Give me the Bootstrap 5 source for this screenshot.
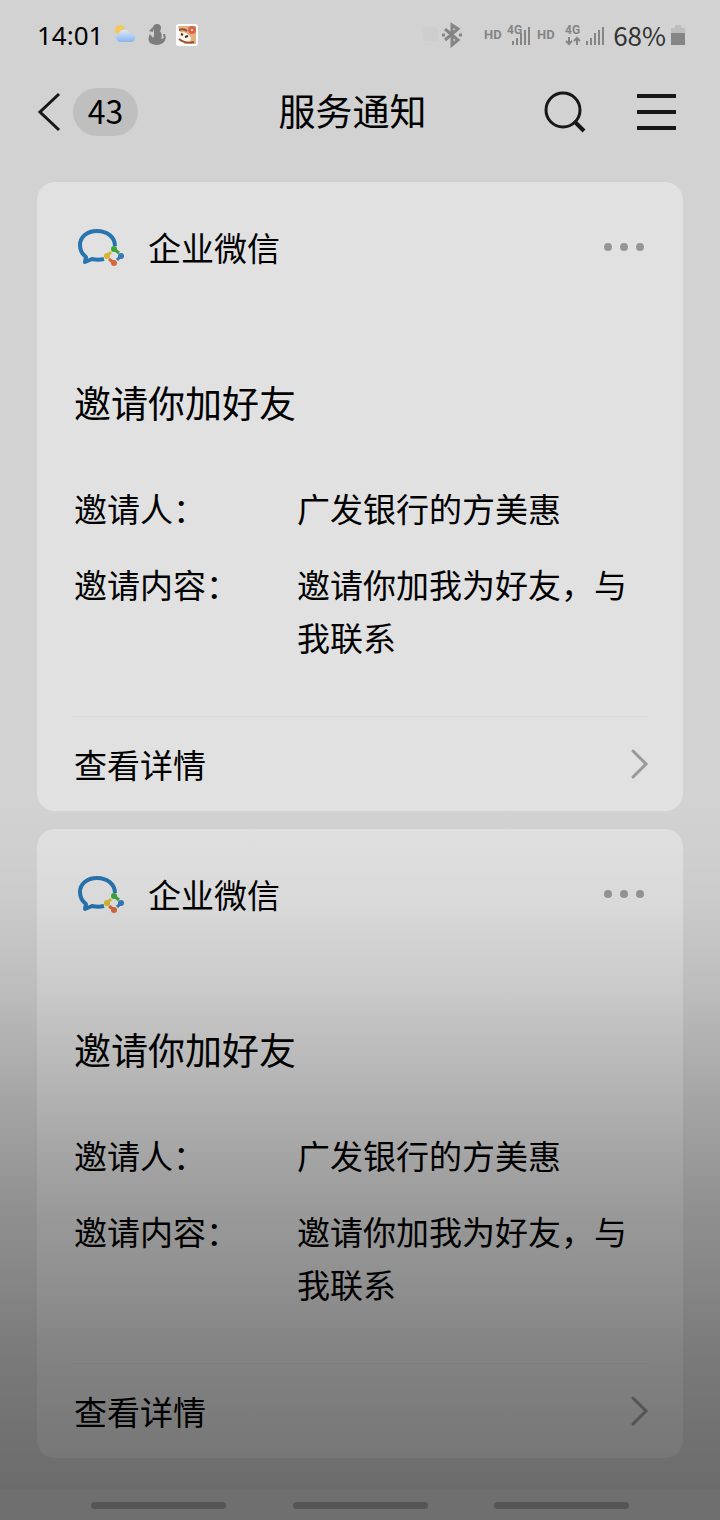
<!DOCTYPE html>
<html lang="zh-CN">
<head>
<meta charset="utf-8">
<meta name="viewport" content="width=device-width, initial-scale=1">
<title>服务通知</title>
<link href="https://cdn.jsdelivr.net/npm/bootstrap@5.3.0/dist/css/bootstrap.min.css" rel="stylesheet">
<style>
  body {
    font-family: "Noto Sans CJK SC", sans-serif;
    font-size: 33px;
    line-height: 53px;
    color: #000;
    background: #d2d2d2;
  }
  .status-bar { height: 70px; padding: 0 34px 0 37px; line-height: 32px; }
  .clock { font-size: 26px; font-family: "Noto Sans", sans-serif; }
  .battery-level { font-size: 26px; color: #333; }
  .top-bar { height: 84px; padding: 0 44px 0 37px; }
  .top-bar h1 { font-size: 37px; line-height: 50px; padding: 0 0 4px 24px; }
  .top-actions { gap: 49px; }
  .unread { font-size: 32px; line-height: 44px; padding-bottom: 4px; width: 65px; color: #000; background: #bfbfbf; }
  .feed { padding: 28px 37px 32px; gap: 18px; }
  .notice { --bs-card-bg: #e1e1e1; --bs-card-color: #000; --bs-card-border-width: 0; border-radius: 18px; padding: 0 36px 0 37px; }
  .notice-head { height: 130px; }
  .notice-title { font-size: 37px; line-height: 52px; margin: 64px 0 54px; }
  .notice-fields { display: grid; grid-template-columns: 223px 1fr; row-gap: 23px; margin: 0 0 52px; }
  .notice-more { border-top: 1px solid #d8d8d8; height: 95px; color: #000; margin: 0 -2px; padding-left: 2px; }
  .shade {
    position: absolute; inset: 0; pointer-events: none;
    background: linear-gradient(transparent 53%, rgba(0,0,0,.03) 59%, rgba(0,0,0,.1) 65%, rgba(0,0,0,.15) 68%, rgba(0,0,0,.24) 74%, rgba(0,0,0,.32) 80%, rgba(0,0,0,.37) 85%, rgba(0,0,0,.42) 89%, rgba(0,0,0,.465) 95%, rgba(0,0,0,.485) 98%);
  }
  .nav-keys { height: 30px; padding: 0 91px; background: #d8d8d8; }
  .nav-keys button { width: 135px; height: 7px; border-radius: 4px; background: #a6a6a6; }
</style>
</head>
<body>
<svg class="d-none">
  <symbol id="logo" viewBox="0 0 50 42">
    <path d="M41 20C41 11 33 5 23 5 13 5 6 11 6 19c0 5 2 9 6 12l-1 5 7-3c4 1 8 1 12 0" fill="none" stroke="#2774ae" stroke-width="4" stroke-linejoin="round"/>
    <g stroke-width="3" fill="none">
      <path d="M40 23l5 4" stroke="#3da33b"/><path d="M47 30l-4 4" stroke="#3679b5"/>
      <path d="M40 37l-5-4" stroke="#d5673a"/><path d="M33 30l4-4" stroke="#d2b62c"/>
    </g>
    <circle cx="40" cy="23" r="3" fill="#3da33b"/><circle cx="47" cy="30" r="3" fill="#3679b5"/>
    <circle cx="40" cy="37" r="3" fill="#d5673a"/><circle cx="33" cy="30" r="3" fill="#d2b62c"/>
  </symbol>
</svg>
<div class="position-relative min-vh-100 d-flex flex-column">
  <header>
    <div class="status-bar d-flex align-items-center justify-content-between">
      <div class="d-flex align-items-center">
        <span class="clock">14:01</span>
        <svg class="ms-2" width="100" height="28" viewBox="0 0 100 28">
          <defs><linearGradient id="sky" x2="0" y2="1"><stop stop-color="#dce9fb"/><stop offset="1" stop-color="#88b4ee"/></linearGradient></defs>
          <circle cx="9" cy="9" r="5" fill="#f3c75c"/>
          <path d="M8 21a5 5 0 0 1 0-9 6 6 0 0 1 11 1 4 4 0 0 1 2 8z" fill="url(#sky)"/>
          <circle cx="46" cy="7" r="4" fill="#7d7d7d"/>
          <path d="M42 6l-4 4 4 1zM43 10h6q3 4 1 8l3-1-1-4 2 0q2 6-2 9-6 4-13 0-3-4 0-9l3 4 1-2z" fill="#7d7d7d"/>
          <rect x="65" y="3" width="22" height="22" rx="3" fill="#fff"/>
          <path d="M67 5h18v18H73z" fill="#e5b184"/>
          <path d="M68 12q7-3 12 5l-1 4q-8 1-12-4z" fill="#fff8e8"/>
          <path d="M68 9q5-2 8 1M68 18q6 5 15 3" stroke="#925238" stroke-width="2" fill="none"/>
          <circle cx="81" cy="9" r="4" fill="#dd6546"/><circle cx="81" cy="9" r="1" fill="#fff"/>
          <path d="M70 13l2 1M74 16l3-1" stroke="#333" stroke-width="2"/>
        </svg>
      </div>
      <div class="d-flex align-items-center">
        <svg width="192" height="28" viewBox="0 0 192 28" fill="none" stroke="#858585" font-family="Roboto, sans-serif" font-weight="700">
          <rect x="2" y="6" width="15" height="14" rx="4" fill="#cecece" stroke="none"/>
          <path d="M24 8l13 11-6 5V4l6 4-13 11" stroke-width="3"/>
          <path d="M21 14h3M38 14h3" stroke-width="3"/>
          <g fill="#858585" stroke="none"><text x="63" y="18" font-size="13">HD</text><text x="86" y="13" font-size="12">4G</text><text x="116" y="18" font-size="13">HD</text><text x="144" y="13" font-size="12">4G</text></g>
          <path d="M92 24v-4M96 24v-7M100 24V12M104 24V9M108 24V6M166 24v-4M170 24v-7M174 24V12M178 24V9M182 24V6" stroke-width="2"/>
          <path d="M148 16v7m-3-3l3 3 3-3M156 24v-7m-3 3l3-3 3 3" stroke-width="2"/>
        </svg>
        <span class="battery-level">68%</span>
        <svg class="ms-1" width="16" height="24" viewBox="0 0 16 24"><path d="M5 2h6v3h4v5H1V5h4z" fill="#bdbdbd"/><path d="M1 10h14v12H1z" fill="#858585"/></svg>
      </div>
    </div>
    <nav class="top-bar d-flex align-items-center">
      <button class="btn border-0 p-0 d-flex align-items-center" type="button" aria-label="返回，43 条未读">
        <svg width="36" height="42" viewBox="0 0 36 42" fill="none" stroke="#171717" stroke-width="3"><path d="M22 3L3 21l19 18"/></svg>
        <span class="unread rounded-pill">43</span>
      </button>
      <h1 class="flex-grow-1 text-center m-0 fw-normal text-nowrap">服务通知</h1>
      <div class="top-actions d-flex align-items-center">
        <button class="btn border-0 p-0 d-flex" type="button" aria-label="搜索">
          <svg width="44" height="44" viewBox="0 0 44 44" fill="none" stroke="#171717"><circle cx="20" cy="20" r="17" stroke-width="3"/><path d="M31 31l10 10" stroke-width="4"/></svg>
        </button>
        <button class="btn border-0 p-0 d-flex" type="button" aria-label="菜单">
          <svg width="40" height="40" viewBox="0 0 40 40" stroke="#171717" stroke-width="4"><path d="M1 4h39M1 20h39M1 36h39"/></svg>
        </button>
      </div>
    </nav>
  </header>

  <main class="feed d-flex flex-column flex-grow-1">
    <article class="card notice">
      <div class="notice-head d-flex align-items-center">
        <svg class="me-4" width="50" height="42"><use href="#logo"/></svg>
        <span>企业微信</span>
        <button class="btn border-0 p-0 ms-auto d-flex" type="button" aria-label="更多"><svg width="44" height="10" fill="#969696"><circle cx="5" cy="5" r="4"/><circle cx="21" cy="5" r="4"/><circle cx="37" cy="5" r="4"/></svg></button>
      </div>
      <h2 class="notice-title fw-normal">邀请你加好友</h2>
      <dl class="notice-fields">
        <dt class="fw-normal">邀请人：</dt><dd class="m-0">广发银行的方美惠</dd>
        <dt class="fw-normal">邀请内容：</dt><dd class="m-0">邀请你加我为好友，与我联系</dd>
      </dl>
      <a href="#" class="notice-more d-flex align-items-center justify-content-between text-decoration-none">查看详情
        <svg width="18" height="32" viewBox="0 0 18 32" fill="none" stroke="#999" stroke-width="3" stroke-linecap="round"><path d="M2 3l13 13L2 29"/></svg></a>
    </article>
    <article class="card notice">
      <div class="notice-head d-flex align-items-center">
        <svg class="me-4" width="50" height="42"><use href="#logo"/></svg>
        <span>企业微信</span>
        <button class="btn border-0 p-0 ms-auto d-flex" type="button" aria-label="更多"><svg width="44" height="10" fill="#969696"><circle cx="5" cy="5" r="4"/><circle cx="21" cy="5" r="4"/><circle cx="37" cy="5" r="4"/></svg></button>
      </div>
      <h2 class="notice-title fw-normal">邀请你加好友</h2>
      <dl class="notice-fields">
        <dt class="fw-normal">邀请人：</dt><dd class="m-0">广发银行的方美惠</dd>
        <dt class="fw-normal">邀请内容：</dt><dd class="m-0">邀请你加我为好友，与我联系</dd>
      </dl>
      <a href="#" class="notice-more d-flex align-items-center justify-content-between text-decoration-none">查看详情
        <svg width="18" height="32" viewBox="0 0 18 32" fill="none" stroke="#999" stroke-width="3" stroke-linecap="round"><path d="M2 3l13 13L2 29"/></svg></a>
    </article>
  </main>

  <footer class="nav-keys d-flex align-items-center justify-content-between">
    <button class="btn border-0 p-0" type="button" aria-label="最近任务"></button>
    <button class="btn border-0 p-0" type="button" aria-label="主屏幕"></button>
    <button class="btn border-0 p-0" type="button" aria-label="返回上一页"></button>
  </footer>
  <div class="shade"></div>
</div>
<script src="https://cdn.jsdelivr.net/npm/bootstrap@5.3.0/dist/js/bootstrap.bundle.min.js"></script>
</body>
</html>
